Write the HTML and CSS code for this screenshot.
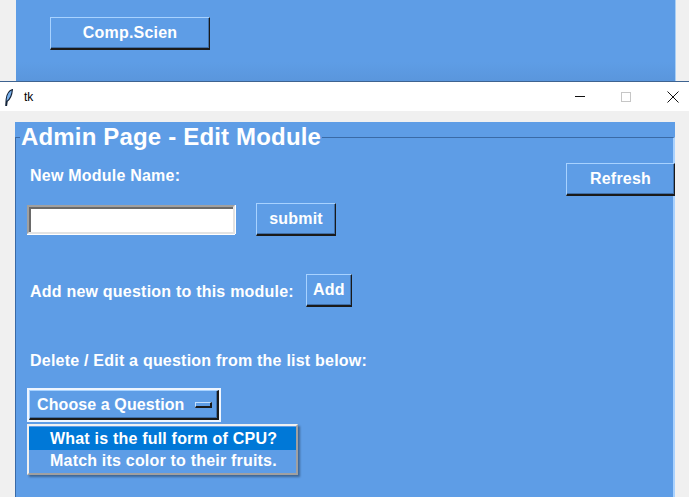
FILE: index.html
```html
<!DOCTYPE html>
<html>
<head>
<meta charset="utf-8">
<link rel="stylesheet" href="styles.css">
</head>
<body>
<div class="backwin">
  <button class="tkbtn comp">Comp.Scien</button>
</div>
<div class="titlebar">
  <svg class="feather" width="8" height="17" viewBox="0 0 8 17">
    <path d="M7.4 0.6 C4.6 1.6 1.8 5.2 1.2 10 L0.8 16.4 L1.6 16.4 L2.2 12.2 C5.2 10 7 5.4 7.4 0.6 Z" fill="#7ab2ee" stroke="#142338" stroke-width="1.1"/>
  </svg>
  <span class="tk">tk</span>
  <span class="spacer"></span>
  <span class="ctl min"><span class="minline"></span></span>
  <span class="ctl max"><span class="maxbox"></span></span>
  <span class="ctl close">
    <svg width="12" height="12" viewBox="0 0 12 12"><path d="M0.5 0.5 L11.5 11.5 M11.5 0.5 L0.5 11.5" stroke="#111" stroke-width="1"/></svg>
  </span>
</div>
<div class="gap"></div>
<div class="win">
  <fieldset class="lf">
    <legend class="lf-title">Admin Page - Edit Module</legend>
    <div class="row row1">
      <span class="lbl lbl1">New Module Name:</span>
      <button class="tkbtn refresh">Refresh</button>
    </div>
    <div class="row row2">
      <div class="entry"></div>
      <button class="tkbtn submit">submit</button>
    </div>
    <div class="row row3">
      <span class="lbl">Add new question to this module:</span>
      <button class="tkbtn add">Add</button>
    </div>
    <div class="row row4">
      <span class="lbl">Delete / Edit a question from the list below:</span>
    </div>
    <div class="row row5">
      <div class="optmenu">
        <div class="optinner">
          <span class="opttext">Choose a Question</span>
          <span class="indicator"></span>
        </div>
      </div>
      <div class="dropdown">
        <div class="item sel">What is the full form of CPU?</div>
        <div class="item">Match its color to their fruits.</div>
      </div>
    </div>
  </fieldset>
</div>
</body>
</html>
```
FILE: styles.css
```css
* { box-sizing: border-box; }
html, body {
  margin: 0;
  padding: 0;
  background: #f0f0f0;
  width: 689px;
  height: 497px;
  overflow: hidden;
  font-family: "Liberation Sans", Arial, sans-serif;
}
.backwin {
  margin-left: 16px;
  width: 660px;
  height: 81px;
  background: linear-gradient(to bottom, #5e9de6 0, #5e9de6 62px, #5a96dc 81px);
  border-right: 1px solid #a9cff5;
  padding: 17px 0 0 34px;
}
.tkbtn {
  display: flex;
  align-items: center;
  justify-content: center;
  background: #5e9de6;
  color: #ffffff;
  font-family: "Liberation Sans", Arial, sans-serif;
  font-weight: bold;
  font-size: 16px;
  letter-spacing: 0.2px;
  padding: 0;
  margin: 0;
  border-style: solid;
  border-width: 1px 1px 2px 1px;
  border-color: #a8d2ff #1a1a1a #1a1a1a #a8d2ff;
  box-shadow: inset -1px -1px 0 #3f6fa8;
}
.comp {
  width: 160px;
  height: 33px;
}
.titlebar {
  height: 30px;
  border-top: 1px solid #3e6390;
  background: #ffffff;
  display: flex;
  align-items: center;
  padding-left: 5px;
}
.feather { margin-top: 1px; }
.tk {
  font-family: "Liberation Sans", Arial, sans-serif;
  font-size: 12px;
  color: #000;
  margin-left: 11px;
  margin-top: 1px;
}
.spacer { flex: 1; }
.ctl {
  width: 46px;
  height: 29px;
  display: flex;
  align-items: center;
  justify-content: center;
}
.close { margin-right: -6px; }
.minline {
  display: block;
  width: 10px;
  height: 1px;
  background: #111;
}
.maxbox {
  display: block;
  width: 10px;
  height: 10px;
  border: 1px solid #c6c6c6;
}
.close svg { display: block; margin-left: 1px; }
.gap { height: 11px; }
.win {
  margin-left: 15px;
  width: 660px;
  height: 375px;
  background: #5e9de6;
  overflow: hidden;
}
.lf {
  margin: 3px 0 0 0;
  padding: 10px 0 0 11px;
  width: 660px;
  height: 400px;
  border-style: solid;
  border-width: 1px 2px 0 1px;
  border-color: #3a6aa6 #a9d2ff #3a6aa6 #3a6aa6;
  min-width: 0;
}
.lf-title {
  font-family: "Liberation Sans", Arial, sans-serif;
  font-weight: bold;
  font-size: 24px;
  line-height: 24px;
  letter-spacing: 0.17px;
  color: #ffffff;
  padding: 0 1px;
  margin-left: -7px;
}
.row {
  display: flex;
  align-items: center;
}
.lbl {
  color: #ffffff;
  font-weight: bold;
  font-size: 16px;
  letter-spacing: 0.22px;
  margin-left: 3px;
}
.row1 {
  justify-content: space-between;
  align-items: flex-start;
  margin-top: 4px;
}
.lbl1 { margin-top: 4px; }
.refresh {
  width: 109px;
  height: 33px;
  margin-right: -2px;
}
.row2 { margin-top: 7px; }
.entry {
  width: 208px;
  height: 29px;
  background: #ffffff;
  border-style: solid;
  border-width: 2px;
  border-color: #a0a0a0 #e3e3e3 #e3e3e3 #a0a0a0;
  box-shadow: inset 2px 2px 0 #6a6a6a, 0 1px 0 #ffffff, 1px 0 0 #ffffff;
}
.submit {
  width: 80px;
  height: 33px;
  margin-left: 21px;
}
.row3 { margin-top: 40px; }
.add {
  width: 46px;
  height: 33px;
  margin-left: 12px;
  margin-top: -2px;
}
.row4 { margin-top: 45px; }
.row5 {
  margin-top: 18px;
  position: relative;
  align-items: flex-start;
}
.optmenu {
  width: 194px;
  height: 34px;
  border: 2px solid #eef5ff;
}
.optinner {
  width: 100%;
  height: 100%;
  display: flex;
  align-items: center;
  padding-left: 7px;
  border-style: solid;
  border-width: 1px 2px 2px 1px;
  border-color: #a8d2ff #1a1a1a #1a1a1a #a8d2ff;
  box-shadow: inset -1px -1px 0 #3f6fa8;
}
.opttext {
  color: #ffffff;
  font-size: 16px;
  font-weight: bold;
  letter-spacing: 0.1px;
}
.indicator {
  display: block;
  width: 17px;
  height: 6px;
  margin-left: 10px;
  margin-top: 1px;
  border-style: solid;
  border-width: 1px 2px 2px 1px;
  border-color: #c4e0ff #1a1a1a #1a1a1a #c4e0ff;
  background: #5e9de6;
}
.dropdown {
  position: absolute;
  left: 0;
  top: 36px;
  width: 271px;
  height: 51px;
  background: #5e9de6;
  border: 2px solid;
  border-color: #f0f0f0 #a0a0a0 #a0a0a0 #f0f0f0;
  box-shadow: 2px 2px 2px rgba(0,0,0,0.35);
  padding: 1px 0 0 0;
}
.item {
  height: 22px;
  color: #ffffff;
  font-weight: bold;
  font-size: 16px;
  line-height: 22px;
  padding-left: 21px;
  letter-spacing: 0.2px;
}
.item.sel { background: #0078d7; height: 23px; line-height: 23px; }
```
